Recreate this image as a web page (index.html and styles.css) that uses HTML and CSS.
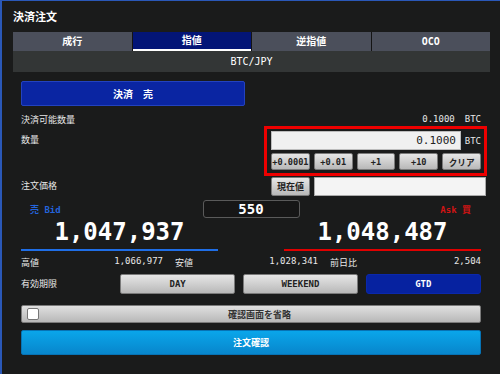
FILE: index.html
```html
<!DOCTYPE html>
<html lang="ja">
<head>
    <meta charset="UTF-8">
    <meta name="viewport" content="width=device-width, initial-scale=1.0">
    <title>決済注文</title>
    <link rel="stylesheet" href="styles.css">
</head>
<body>

    <!-- Titre + onglets -->
    <div class="title">決済注文</div>
    <div class="tabs">
        <div class="tab">成行</div>
        <div class="tab active">指値</div>
        <div class="tab">逆指値</div>
        <div class="tab">OCO</div>
    </div>
    <div class="pair">BTC/JPY</div>

    <div class="content">
        <button class="side-btn">決済　売</button>

        <div class="avail">
            <span>決済可能数量</span>
            <span class="avail-val">0.1000<span class="avail-unit">BTC</span></span>
        </div>

        <!-- Quantité -->
        <div class="form-row qty-row">
            <div class="label">数量</div>
            <div class="qty-box">
                <div class="qty-input-row">
                    <input class="qty-input" type="text" value="0.1000" readonly>
                    <span class="unit">BTC</span>
                </div>
                <div class="step-btns">
                    <button class="gray-btn">+0.0001</button>
                    <button class="gray-btn">+0.01</button>
                    <button class="gray-btn">+1</button>
                    <button class="gray-btn">+10</button>
                    <button class="gray-btn">クリア</button>
                </div>
            </div>
        </div>

        <!-- Prix -->
        <div class="form-row price-row">
            <div class="label">注文価格</div>
            <div class="price-ctrl">
                <button class="gray-btn now-btn">現在値</button>
                <input class="price-input" type="text" readonly>
            </div>
        </div>

        <!-- Bid / Ask -->
        <div class="quote-head">
            <span class="bid-label">売 Bid</span>
            <span class="spread">550</span>
            <span class="ask-label">Ask 買</span>
        </div>
        <div class="quote-nums">
            <div class="price-big bid">1,047,937</div>
            <div class="price-big ask">1,048,487</div>
        </div>

        <div class="stats">
            <div class="stat"><span>高値</span><span>1,066,977</span></div>
            <div class="stat"><span>安値</span><span>1,028,341</span></div>
            <div class="stat"><span>前日比</span><span>2,504</span></div>
        </div>

        <!-- Validité -->
        <div class="expiry">
            <div class="expiry-label">有効期限</div>
            <div class="exp-btns">
                <button class="gray-btn">DAY</button>
                <button class="gray-btn">WEEKEND</button>
                <button class="gtd-btn">GTD</button>
            </div>
        </div>

        <div class="skip-bar">
            <span class="check"></span>
            <span class="skip-text">確認画面を省略</span>
        </div>

        <button class="confirm-btn">注文確認</button>
    </div>

</body>
</html>
```

FILE: styles.css
```css
body {
    margin: 0;
    height: 374px;
    box-sizing: border-box;
    overflow: hidden;
    background: #1a1b1b;
    border-top: 1px solid #2a58b8;
    border-left: 2px solid #2a58b8;
    color: #e8e8e8;
    font-family: "DejaVu Sans Mono", "Noto Sans CJK JP", monospace;
    font-size: 9px;
}

button, input {
    font-family: inherit;
    padding: 0;
    margin: 0;
    box-sizing: border-box;
}

/* Titre */
.title {
    height: 31px;
    box-sizing: border-box;
    padding: 3px 0 0 11px;
    line-height: 28px;
    font-size: 11px;
    font-weight: bold;
    color: #fff;
}

/* Onglets */
.tabs {
    margin: 0 10px 0 11px;
    display: grid;
    grid-template-columns: repeat(4, 1fr);
    gap: 1px;
    background: #141414;
}

.tab {
    height: 19px;
    box-sizing: border-box;
    line-height: 19px;
    text-align: center;
    background: #4b4f5b;
    color: #fff;
    font-size: 10px;
    font-weight: bold;
}

.tab.active {
    background: #031577;
    border-bottom: 2px solid #fff;
    line-height: 18px;
}

.pair {
    margin: 0 10px 0 11px;
    height: 21px;
    line-height: 21px;
    text-align: center;
    background: #333636;
    color: #fff;
    font-size: 10px;
}

.content {
    margin: 9px 19px 0 19px;
}

.side-btn {
    display: block;
    width: 224px;
    height: 25px;
    background: #0a25a2;
    border: 1px solid #2342bf;
    border-radius: 2px;
    color: #fff;
    font-size: 10px;
    font-weight: bold;
}

.avail {
    margin-top: 3px;
    height: 20px;
    display: flex;
    justify-content: space-between;
    align-items: center;
}

.avail-unit {
    margin-left: 10px;
}

.form-row {
    display: flex;
}

.label {
    width: 250px;
    flex: none;
    line-height: 19px;
}

.qty-row {
    margin-top: 2px;
}

/* Cadre rouge */
.qty-box {
    width: 210px;
    border: 3px solid #ee0000;
    padding: 2px 3px 3px 4px;
    margin: -5px -6px -6px -7px;
}

.qty-input-row {
    display: flex;
    align-items: center;
    height: 19px;
}

.qty-input {
    width: 190px;
    height: 19px;
    border: 1px solid #bcbcbc;
    background: #f0f0f0;
    color: #222;
    text-align: right;
    font-size: 11px;
    padding-right: 4px;
}

.unit {
    margin-left: auto;
}

.step-btns {
    margin-top: 3px;
    display: grid;
    grid-template-columns: repeat(5, 1fr);
    gap: 4px;
}

.step-btns .gray-btn {
    height: 17px;
    font-size: 8.6px;
}

.gray-btn {
    background: linear-gradient(#e6e6e6, #b8b8b8);
    border: 1px solid #7a7a7a;
    border-radius: 2px;
    color: #222;
    font-size: 9px;
    font-weight: bold;
}

.price-row {
    margin-top: 7px;
}

.price-ctrl {
    width: 210px;
    display: flex;
    gap: 4px;
}

.now-btn {
    width: 39px;
    height: 19px;
    flex: none;
}

.price-input {
    flex: 1;
    height: 19px;
    border: 1px solid #aaa;
    background: #f4f4f4;
}

/* Bid / Ask */
.quote-head {
    margin-top: 4px;
    height: 18px;
    display: grid;
    grid-template-columns: 1fr 97px 1fr;
    align-items: center;
    font-weight: bold;
}

.bid-label {
    padding-left: 9px;
    color: #2464dc;
}

.ask-label {
    text-align: right;
    padding-right: 10px;
    color: #d01414;
}

.spread {
    height: 18px;
    box-sizing: border-box;
    border: 1px solid #5a5a5a;
    border-radius: 3px;
    background: #161616;
    text-align: center;
    line-height: 16px;
    font-size: 14px;
    color: #fff;
}

.quote-nums {
    display: grid;
    grid-template-columns: 197px 1fr 197px;
}

.price-big {
    text-align: center;
    line-height: 28px;
    padding-bottom: 3px;
    border-bottom: 2px solid;
    font-size: 24px;
    font-weight: bold;
    color: #fff;
}

.price-big.bid {
    border-color: #1f6ee6;
}

.price-big.ask {
    grid-column: 3;
    border-color: #e00000;
}

.stats {
    margin-top: 2px;
    height: 19px;
    display: grid;
    grid-template-columns: 142px 143px 1fr;
    column-gap: 12px;
    align-items: center;
}

.stat {
    display: flex;
    justify-content: space-between;
}

/* Validité */
.expiry {
    margin-top: 2px;
    height: 20px;
    display: flex;
}

.expiry-label {
    width: 99px;
    flex: none;
    line-height: 20px;
}

.exp-btns {
    flex: 1;
    display: grid;
    grid-template-columns: repeat(3, 1fr);
    gap: 7.5px;
}

.gtd-btn {
    background: #0622a0;
    border: 1px solid #0a28ac;
    border-radius: 3px;
    color: #fff;
    font-size: 9px;
    font-weight: bold;
}

.skip-bar {
    margin-top: 11px;
    height: 18px;
    box-sizing: border-box;
    display: flex;
    align-items: center;
    background: linear-gradient(#e0e0e0, #b8b8b8);
    border: 1px solid #7a7a7a;
    border-radius: 2px;
}

.check {
    width: 12px;
    height: 12px;
    box-sizing: border-box;
    margin-left: 5px;
    background: #fff;
    border: 1px solid #777;
    border-radius: 2px;
}

.skip-text {
    flex: 1;
    text-align: center;
    color: #333;
    font-weight: bold;
}

.confirm-btn {
    display: block;
    width: 100%;
    height: 25px;
    margin-top: 7px;
    background: linear-gradient(#0aa6ea, #0886cc);
    border: 1px solid #0673b5;
    border-radius: 2px;
    color: #fff;
    font-size: 9px;
    font-weight: bold;
}
```
